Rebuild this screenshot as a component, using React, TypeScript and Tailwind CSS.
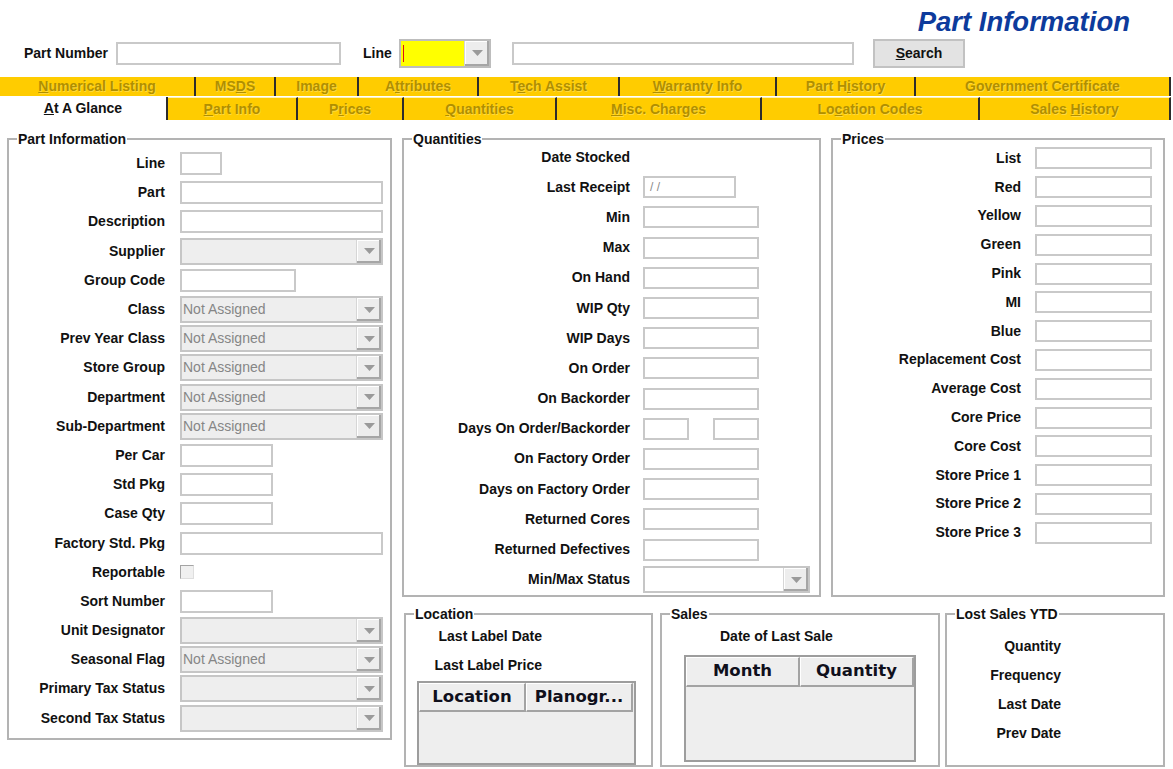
import React from 'react'

type Ctl = {
  label: string
  kind?: 'input' | 'combo' | 'check' | 'pair' | 'none'
  w?: string
  text?: string
  open?: boolean
}

function Arrow() {
  return (
    <svg width="11" height="6" viewBox="0 0 11 6">
      <path d="M0 0h11L5.5 6z" fill="#9a9a9a" />
    </svg>
  )
}

function DropButton() {
  return (
    <div className="flex w-[25px] shrink-0 items-center justify-center border-l border-[#d6d6d6] bg-[#ededed] shadow-[inset_-2px_-2px_0_#a6a6a6,inset_1px_1px_0_#ffffff]">
      <Arrow />
    </div>
  )
}

function Input({ w, h = 'h-[22px]', text }: { w?: string; h?: string; text?: string }) {
  return (
    <div className={`${w} ${h} border-2 border-[#c9c9c9] bg-white pl-[5px] text-[12px] leading-[18px] text-[#8a8a8a]`}>
      {text}
    </div>
  )
}

function Combo({ w, text, open }: { w?: string; text?: string; open?: boolean }) {
  return (
    <div className={`flex h-[27px] border-2 border-[#c6c6c6] ${open ? 'bg-white' : 'bg-[#eeeeee]'} ${w}`}>
      <div className="flex-1 pl-[1px] text-[14px] leading-[23px] text-[#868686]">{text}</div>
      <DropButton />
    </div>
  )
}

function Control({ c, h }: { c: Ctl; h: string }) {
  if (c.kind === 'combo') return <Combo w={c.w ?? 'w-[203px]'} text={c.text} open={c.open} />
  if (c.kind === 'check')
    return <div className="h-[14px] w-[14px] border border-[#a4a4a4] border-b-[#dedede] border-r-[#dedede] bg-[#f0f0f0]" />
  if (c.kind === 'pair')
    return (
      <div className="flex gap-[24px]">
        <Input w="w-[46px]" h={h} />
        <Input w="w-[46px]" h={h} />
      </div>
    )
  if (c.kind === 'none') return null
  return <Input w={c.w} h={h} text={c.text} />
}

function Row({ c, row, lw, gap, ih }: { c: Ctl; row: string; lw: string; gap: string; ih: string }) {
  return (
    <div className={`flex items-center ${row}`}>
      <div className={`${lw} shrink-0 whitespace-nowrap text-right text-[14px] font-bold text-[#111]`}>{c.label}</div>
      <div className={gap}>
        <Control c={c} h={ih} />
      </div>
    </div>
  )
}

function Group({ title, className, children }: { title: string; className: string; children?: React.ReactNode }) {
  return (
    <div className={`border-2 border-[#b3b3b3] ${className}`}>
      <div className="-mt-[9px] ml-[8px] w-fit bg-white px-[1px] text-[14px] font-bold leading-[16px] text-[#111]">{title}</div>
      {children}
    </div>
  )
}

function HeadCell({ w, children }: { w: string; children: React.ReactNode }) {
  return (
    <div className={`${w} flex items-center justify-center border border-white border-b-2 border-r-2 border-b-[#a3a3a3] border-r-[#a3a3a3] bg-[#eeeeee] font-['DejaVu_Sans',sans-serif] text-[16.5px] font-bold text-[#10101c]`}>
      {children}
    </div>
  )
}

const leftRows: Ctl[] = [
  { label: 'Line', w: 'w-[42px]' },
  { label: 'Part', w: 'w-[203px]' },
  { label: 'Description', w: 'w-[203px]' },
  { label: 'Supplier', kind: 'combo' },
  { label: 'Group Code', w: 'w-[116px]' },
  { label: 'Class', kind: 'combo', text: 'Not Assigned' },
  { label: 'Prev Year Class', kind: 'combo', text: 'Not Assigned' },
  { label: 'Store Group', kind: 'combo', text: 'Not Assigned' },
  { label: 'Department', kind: 'combo', text: 'Not Assigned' },
  { label: 'Sub-Department', kind: 'combo', text: 'Not Assigned' },
  { label: 'Per Car', w: 'w-[93px]' },
  { label: 'Std Pkg', w: 'w-[93px]' },
  { label: 'Case Qty', w: 'w-[93px]' },
  { label: 'Factory Std. Pkg', w: 'w-[203px]' },
  { label: 'Reportable', kind: 'check' },
  { label: 'Sort Number', w: 'w-[93px]' },
  { label: 'Unit Designator', kind: 'combo' },
  { label: 'Seasonal Flag', kind: 'combo', text: 'Not Assigned' },
  { label: 'Primary Tax Status', kind: 'combo' },
  { label: 'Second Tax Status', kind: 'combo' },
]

const qtyRows: Ctl[] = [
  { label: 'Date Stocked', kind: 'none' },
  { label: 'Last Receipt', w: 'w-[93px]', text: '/ /' },
  { label: 'Min', w: 'w-[116px]' },
  { label: 'Max', w: 'w-[116px]' },
  { label: 'On Hand', w: 'w-[116px]' },
  { label: 'WIP Qty', w: 'w-[116px]' },
  { label: 'WIP Days', w: 'w-[116px]' },
  { label: 'On Order', w: 'w-[116px]' },
  { label: 'On Backorder', w: 'w-[116px]' },
  { label: 'Days On Order/Backorder', kind: 'pair' },
  { label: 'On Factory Order', w: 'w-[116px]' },
  { label: 'Days on Factory Order', w: 'w-[116px]' },
  { label: 'Returned Cores', w: 'w-[116px]' },
  { label: 'Returned Defectives', w: 'w-[116px]' },
  { label: 'Min/Max Status', kind: 'combo', w: 'w-[167px]', open: true },
]

const priceRows = [
  'List', 'Red', 'Yellow', 'Green', 'Pink', 'MI', 'Blue', 'Replacement Cost', 'Average Cost',
  'Core Price', 'Core Cost', 'Store Price 1', 'Store Price 2', 'Store Price 3',
]

const topTabs: { w: string; label: React.ReactNode }[] = [
  { w: 'w-[196px]', label: <><u>N</u>umerical Listing</> },
  { w: 'w-[80px]', label: <>MS<u>D</u>S</> },
  { w: 'w-[83px]', label: <>Ima<u>g</u>e</> },
  { w: 'w-[120px]', label: <>A<u>t</u>tributes</> },
  { w: 'w-[141px]', label: <>T<u>e</u>ch Assist</> },
  { w: 'w-[157px]', label: <><u>W</u>arranty Info</> },
  { w: 'w-[139px]', label: <>Part H<u>i</u>story</> },
  { w: 'w-[255px]', label: <>Government Certificate</> },
]

const lowTabs: { w: string; label: React.ReactNode }[] = [
  { w: 'w-[130px]', label: <><u>P</u>art Info</> },
  { w: 'w-[106px]', label: <>P<u>r</u>ices</> },
  { w: 'w-[153px]', label: <><u>Q</u>uantities</> },
  { w: 'w-[205px]', label: <><u>M</u>isc. Charges</> },
  { w: 'w-[218px]', label: <>Lo<u>c</u>ation Codes</> },
  { w: 'w-[191px]', label: <>Sales <u>H</u>istory</> },
]

const tabCls =
  'flex items-center justify-center border-r-2 border-[#2c2c2c] bg-[#ffcc00] text-[14px] font-bold text-[#b08f00] [text-shadow:1px_1px_0_rgba(255,255,255,0.25)]'

export default function App() {
  return (
    <div className="h-[769px] w-[1173px] overflow-hidden bg-white font-['Liberation_Sans',Arial,sans-serif] text-[#111]">
      {/* header */}
      <div className="flex h-[38px] justify-end pr-[43px] pt-[6px]">
        <span className="text-[27.5px] font-bold italic leading-[32px] text-[#0d3b9c]">Part Information</span>
      </div>
      <div className="flex h-[30px] items-center pl-[24px]">
        <div className="w-[92px] text-[14px] font-bold">Part Number</div>
        <Input w="w-[225px]" h="h-[23px]" />
        <div className="ml-[22px] w-[36px] text-[14px] font-bold">Line</div>
        <div className="flex h-[29px] w-[92px] border-2 border-[#bdbdbd] bg-[#ffff00]">
          <div className="flex flex-1 items-center pl-[2px]">
            <div className="h-[17px] w-[1px] bg-[#e01010]" />
          </div>
          <DropButton />
        </div>
        <Input w="ml-[21px] w-[342px]" h="h-[23px]" />
        <button className="ml-[19px] h-[29px] w-[92px] border-2 border-[#c2c2c2] bg-[#e3e3e3] text-[14px] font-bold text-[#111]">
          <u>S</u>earch
        </button>
      </div>

      {/* tabs */}
      <div className="mt-[9px] flex h-[19px]">
        {topTabs.map((t, i) => (
          <div key={i} className={`${t.w} ${tabCls}`}>
            <span>{t.label}</span>
          </div>
        ))}
      </div>
      <div className="mt-[1px] flex h-[23px]">
        <div className="flex w-[168px] items-center justify-center border-r-2 border-[#2c2c2c] bg-white text-[14px] font-bold text-[#111]">
          <span><u>A</u>t A Glance</span>
        </div>
        {lowTabs.map((t, i) => (
          <div key={i} className={`${t.w} ${tabCls} border-t border-t-[#fff3b0]`}>
            <span>{t.label}</span>
          </div>
        ))}
      </div>

      {/* body */}
      <div className="flex pl-[7px] pt-[18px]">
        <Group title="Part Information" className="h-[602px] w-[385px]">
          <div className="mt-[2px]">
            {leftRows.map((c) => (
              <Row key={c.label} c={c} row="h-[29.2px]" lw="w-[156px]" gap="ml-[15px]" ih="h-[23px]" />
            ))}
          </div>
        </Group>

        <div className="ml-[10px] flex w-[763px] flex-col">
          <div className="flex h-[459px]">
            <Group title="Quantities" className="w-[419px]">
              <div className="-mt-[5px]">
                {qtyRows.map((c) => (
                  <Row key={c.label} c={c} row="h-[30.2px]" lw="w-[226px]" gap="ml-[13px]" ih="h-[22px]" />
                ))}
              </div>
            </Group>
            <Group title="Prices" className="ml-[10px] w-[334px]">
              <div className="-mt-[3px]">
                {priceRows.map((p) => (
                  <Row key={p} c={{ label: p, w: 'w-[117px]' }} row="h-[28.8px]" lw="w-[188px]" gap="ml-[14px]" ih="h-[22px]" />
                ))}
              </div>
            </Group>
          </div>

          <div className="mt-[16px] flex h-[154px] pl-[2px]">
            <Group title="Location" className="w-[249px]">
              <div className="w-[136px] text-right text-[14px] font-bold leading-[29px]">Last Label Date</div>
              <div className="w-[136px] text-right text-[14px] font-bold leading-[29px]">Last Label Price</div>
              <div className="ml-[11px] mt-[1px] h-[84px] w-[219px] border-2 border-[#9d9d9d] bg-[#eeeeee]">
                <div className="flex h-[29px]">
                  <HeadCell w="w-[107px]">Location</HeadCell>
                  <HeadCell w="w-[107px]">Planogr...</HeadCell>
                </div>
              </div>
            </Group>

            <Group title="Sales" className="ml-[7px] w-[280px]">
              <div className="pl-[58px] text-[14px] font-bold leading-[28px]">Date of Last Sale</div>
              <div className="ml-[22px] mt-[5px] h-[107px] w-[232px] border-2 border-[#9d9d9d] bg-[#eeeeee]">
                <div className="flex h-[30px]">
                  <HeadCell w="w-[114px]">Month</HeadCell>
                  <HeadCell w="w-[114px]">Quantity</HeadCell>
                </div>
              </div>
            </Group>

            <Group title="Lost Sales YTD" className="ml-[5px] w-[220px]">
              <div className="mt-[10px]">
                {['Quantity', 'Frequency', 'Last Date', 'Prev Date'].map((l) => (
                  <div key={l} className="w-[114px] text-right text-[14px] font-bold leading-[29px]">
                    {l}
                  </div>
                ))}
              </div>
            </Group>
          </div>
        </div>
      </div>
    </div>
  )
}
